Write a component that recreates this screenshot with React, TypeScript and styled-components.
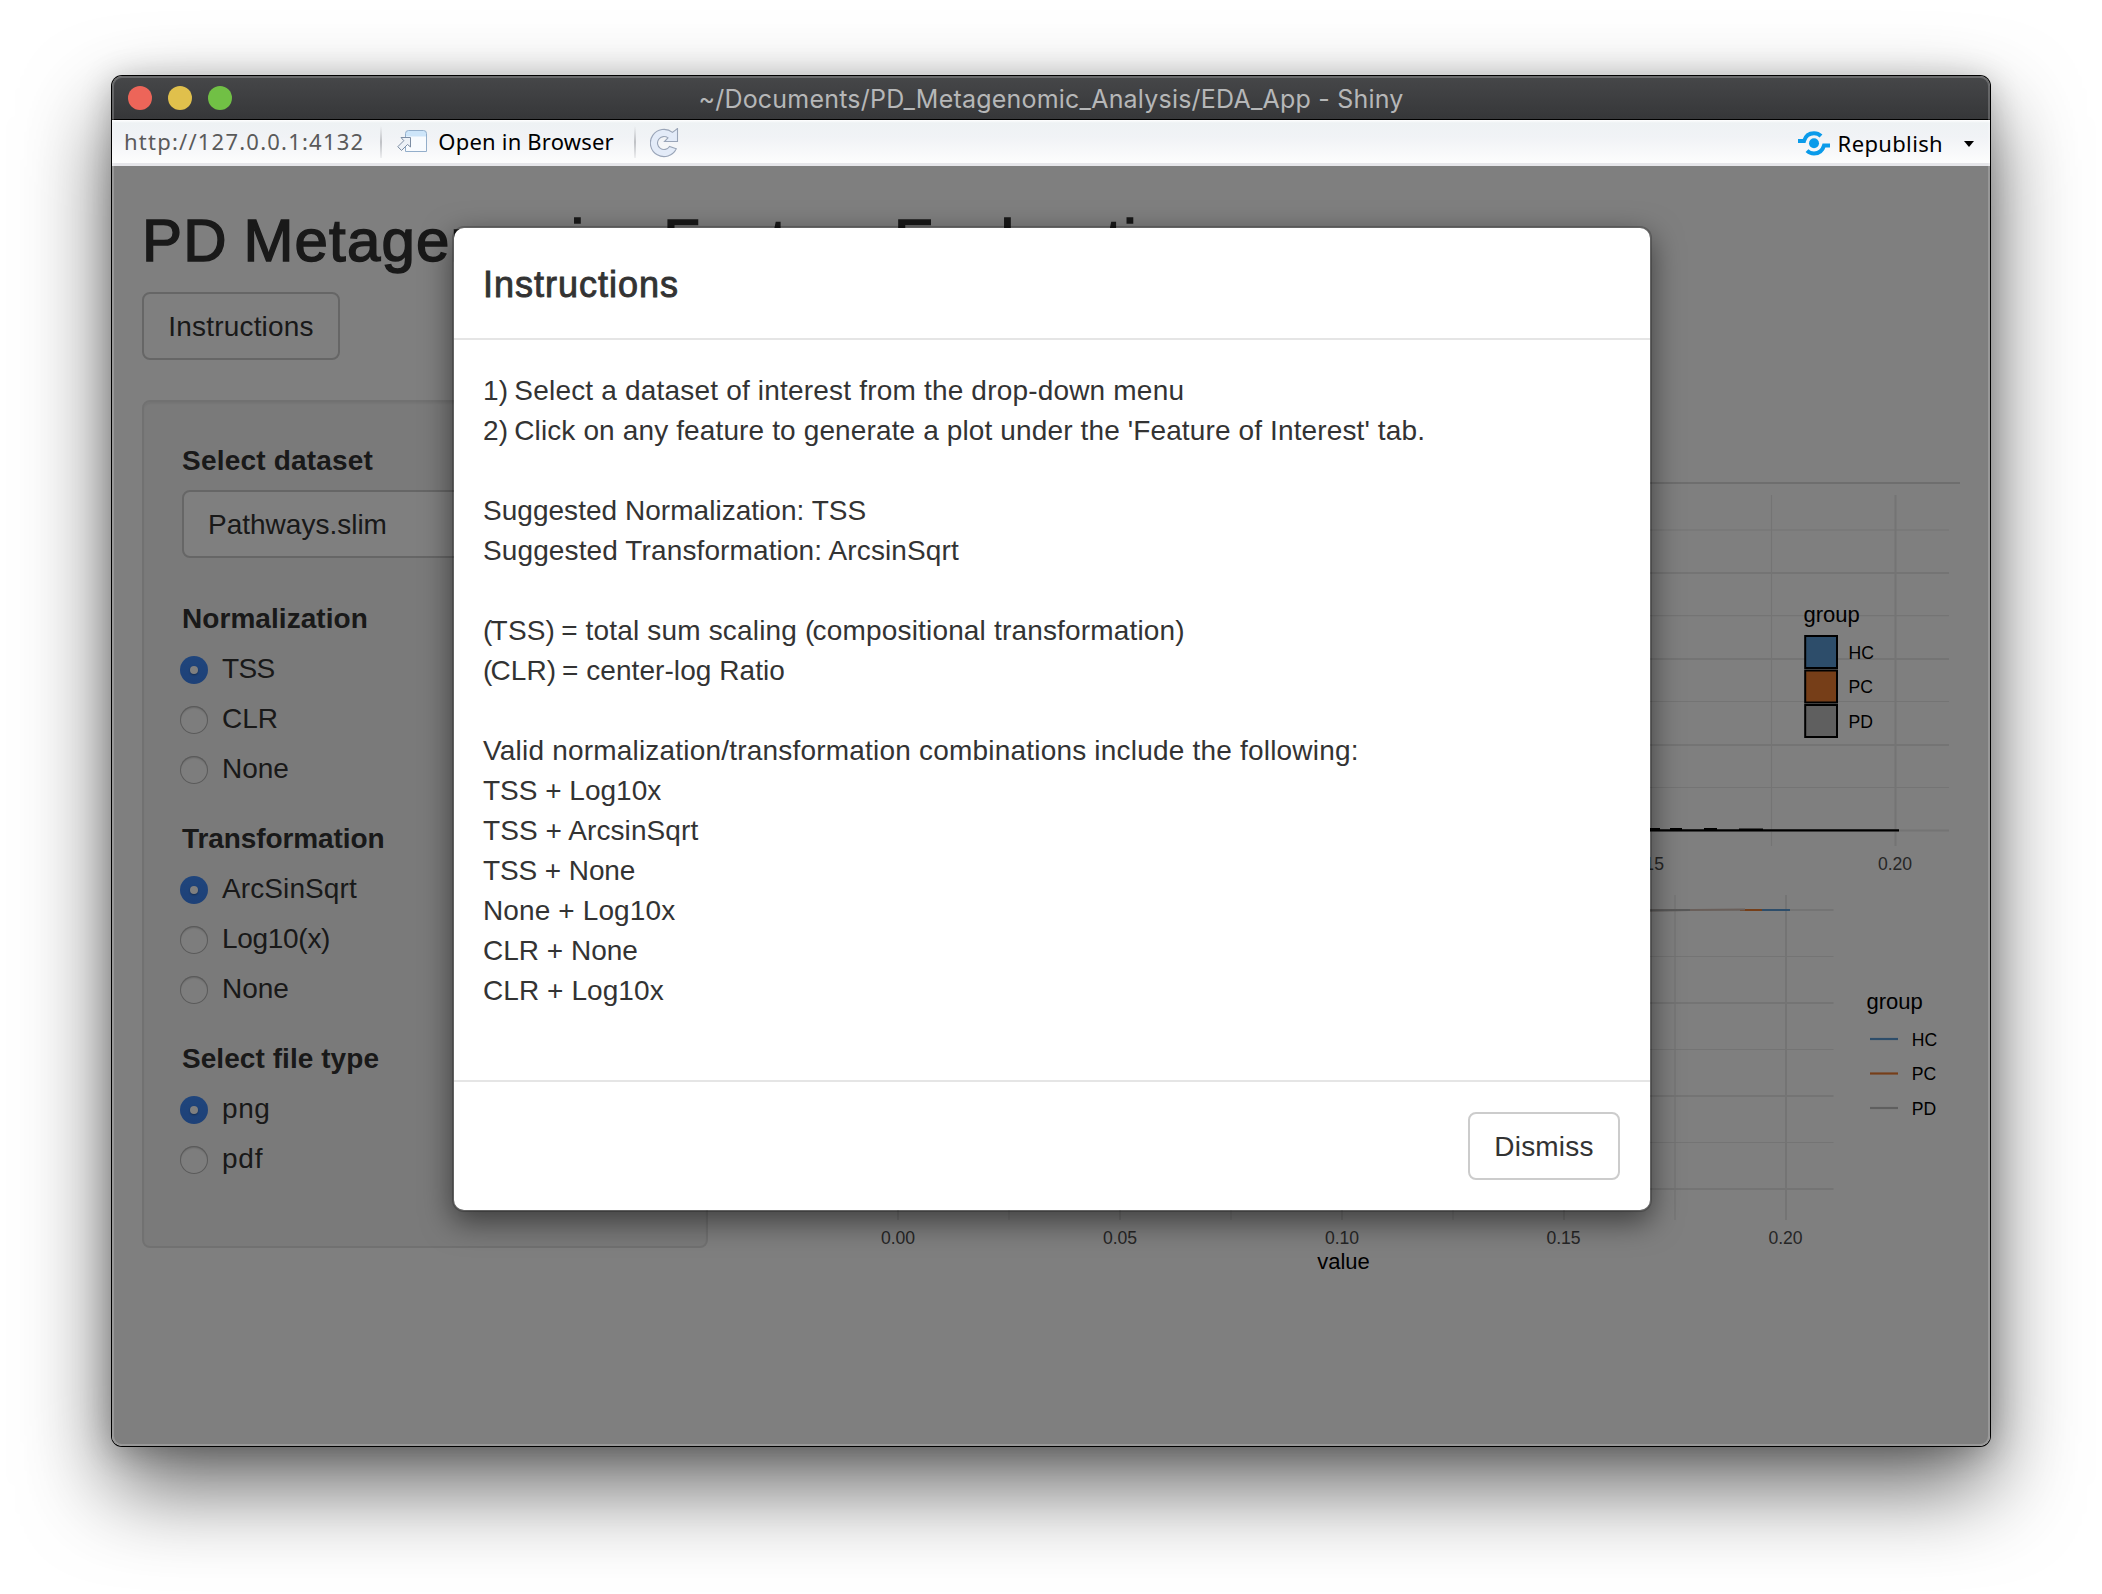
import React from "react";
import styled, { createGlobalStyle } from "styled-components";

const sans = `"Liberation Sans", Arial, sans-serif`;
const ui = `"Noto Sans", "Open Sans", sans-serif`;

const GlobalStyle = createGlobalStyle`
  *, *::before, *::after { box-sizing: border-box; }
  html, body { margin: 0; background: #fff; }
  body { width: 2102px; height: 1594px; overflow: hidden; font-family: ${sans}; font-size: 28px; line-height: 42px; color: #333; }
  h1, h2, p { margin: 0; font-weight: 400; }
`;

const Desktop = styled.div`
  width: 2102px;
  height: 1594px;
  padding: 76px 112px 148px;
  display: flex;
`;

const WindowFrame = styled.div`
  flex: 1;
  display: flex;
  border-radius: 10px;
  box-shadow: 0 0 0 1px #000, 0 40px 88px rgba(0, 0, 0, 0.62), 0 4px 32px rgba(0, 0, 0, 0.24);
`;

const Window = styled.div`
  position: relative;
  flex: 1;
  display: flex;
  flex-direction: column;
  border-radius: 10px;
  overflow: hidden;
`;

const EdgeHighlight = styled.div`
  position: absolute;
  inset: 0;
  border-radius: 10px;
  box-shadow: inset 0 0 0 2px rgba(255, 255, 255, 0.2);
  pointer-events: none;
`;

const TitleBar = styled.header`
  height: 44px;
  padding: 0 16px;
  display: grid;
  grid-template-columns: 1fr auto 1fr;
  align-items: center;
  background: linear-gradient(#464749, #363739);
  border-bottom: 1px solid #000;
`;

const Lights = styled.div`
  display: flex;
  gap: 16px;
`;

const Light = styled.span<{ $color: string }>`
  width: 24px;
  height: 24px;
  border-radius: 50%;
  background: ${(p) => p.$color};
`;

const WindowTitle = styled.h1`
  padding-top: 2px;
  font: 400 25px/40px Inter, Roboto, sans-serif;
  letter-spacing: 0.21px;
  color: #b6b7b8;
`;

const Toolbar = styled.div`
  height: 46px;
  display: flex;
  align-items: center;
  padding: 0 16px 0 12px;
  font: 400 22px/43px ${ui};
  color: #000;
  background: linear-gradient(#fff 0, #eef2f4 3px, #f1f3f6 18px, #fdfdfd 43px);
  border-bottom: 3px solid #e6e6ea;
`;

const Address = styled.span`
  letter-spacing: 1.22px;
  color: #5a5a5a;
`;

const Separator = styled.span<{ $left: number; $right: number }>`
  width: 2px;
  height: 32px;
  margin: 0 ${(p) => p.$right}px 0 ${(p) => p.$left}px;
  background: linear-gradient(rgba(190, 192, 196, 0), #bfc1c5 50%, rgba(190, 192, 196, 0.2));
`;

const ToolLabel = styled.span<{ $gap: number; $spacing: number }>`
  margin-left: ${(p) => p.$gap}px;
  letter-spacing: ${(p) => p.$spacing}px;
`;

const Spacer = styled.span`
  flex: 1;
`;

const PublishMenu = styled.div`
  display: flex;
  align-items: center;
  padding-top: 3px;
`;

const Caret = styled.span`
  margin: 1px 0 0 21px;
  border: 5.5px solid transparent;
  border-top: 6px solid #000;
  border-bottom: 0;
`;

const Page = styled.main`
  position: relative;
  flex: 1;
  padding: 0 30px;
  background: #fff;
`;

const PageTitle = styled.h2`
  height: 106px;
  padding-top: 42px;
  font-size: 60px;
  line-height: 66px;
  letter-spacing: 1.15px;
  word-spacing: -2px;
  -webkit-text-stroke: 1.5px #333;
  white-space: nowrap;
`;

const Button = styled.button<{ $width: number }>`
  display: block;
  width: ${(p) => p.$width}px;
  height: 68px;
  padding: 1px 0 0;
  border: 2px solid #ccc;
  border-radius: 8px;
  background: #fff;
  font: 400 28px/40px ${sans};
  letter-spacing: 0.2px;
  color: #333;
`;

const TitleBlock = styled.div`
  height: 234px;
  display: flex;
  flex-direction: column;
  gap: 20px;
`;

const Columns = styled.div`
  display: flex;
  align-items: flex-start;
  gap: 30px;
`;

const Well = styled.aside`
  width: 566px;
  padding: 38px;
  border: 2px solid #e3e3e3;
  border-radius: 8px;
  background: #f5f5f5;
  box-shadow: inset 0 2px 2px rgba(0, 0, 0, 0.05);
`;

const Group = styled.div<{ $gap?: number }>`
  margin-bottom: ${(p) => p.$gap ?? 30}px;
`;

const Label = styled.div<{ $spacing?: number }>`
  height: 40px;
  font-weight: 700;
  letter-spacing: ${(p) => p.$spacing ?? 0}px;
`;

const SelectBox = styled.div`
  height: 68px;
  margin-top: 10px;
  padding: 12px 24px;
  border: 2px solid #ccc;
  border-radius: 8px;
  background: #fff;
`;

const Option = styled.label`
  display: flex;
  align-items: flex-start;
  gap: 14px;
  height: 40px;
  margin: 10px 0 0 -2px;
`;

const OptionText = styled.span<{ $spacing?: number }>`
  letter-spacing: ${(p) => p.$spacing ?? 0}px;
`;

const Radio = styled.span<{ $on: boolean }>`
  width: 28px;
  height: 28px;
  margin-top: 8px;
  border-radius: 50%;
  display: grid;
  place-items: center;
  background: ${(p) => (p.$on ? "linear-gradient(#3f8af8, #3b82f0)" : "#fbfbfb")};
  box-shadow: ${(p) => (p.$on ? "none" : "inset 0 0 0 1px #b4b4b4, inset 0 2px 2px rgba(0,0,0,.18)")};
  &::after {
    content: "";
    width: 8px;
    height: 8px;
    border-radius: 50%;
    background: ${(p) => (p.$on ? "#fff" : "transparent")};
    box-shadow: ${(p) => (p.$on ? "0 1px 2px rgba(0,0,0,.35)" : "none")};
  }
`;

const Content = styled.section`
  flex: 1;
  display: flex;
  flex-direction: column;
`;

const TabStrip = styled.nav`
  height: 84px;
  border-bottom: 2px solid #ddd;
`;

const Plot = styled.svg`
  display: block;
  font-family: ${sans};
`;

const Backdrop = styled.div`
  position: absolute;
  inset: 0;
  padding-top: 60px;
  background: rgba(0, 0, 0, 0.5);
`;

const Dialog = styled.div`
  width: 1200px;
  margin: 0 0 0 340px;
  border: 2px solid rgba(0, 0, 0, 0.2);
  border-radius: 12px;
  background: #fff;
  background-clip: padding-box;
  box-shadow: 0 10px 30px rgba(0, 0, 0, 0.5);
`;

const DialogHeader = styled.div`
  height: 112px;
  padding: 31px 29px;
  border-bottom: 2px solid #e5e5e5;
`;

const DialogTitle = styled.h2`
  font-size: 36px;
  line-height: 52px;
  letter-spacing: 1px;
  -webkit-text-stroke: 0.9px #333;
`;

const DialogBody = styled.div`
  height: 740px;
  padding: 30px 29px;
`;

const Line = styled.p<{ $spacing: number }>`
  height: 40px;
  letter-spacing: ${(p) => p.$spacing}px;
  white-space: pre;
`;

const Paren = styled.span`
  margin-right: -1.9px;
`;

const DialogFooter = styled.div`
  display: flex;
  justify-content: flex-end;
  padding: 30px;
  border-top: 2px solid #e5e5e5;
`;

const OpenIcon = () => (
  <svg width="31" height="23" viewBox="0 0 31 23">
    <path d="M8.5 21.5V3.5Q8.5 .5 11.5 .5H26.5Q29.5 .5 29.5 3.5V21.5Z" fill="#f8fbfe" />
    <path d="M8.5 6.5V3.5Q8.5 .5 11.5 .5H26.5Q29.5 .5 29.5 3.5V6.5Z" fill="#cde5f9" />
    <path d="M8.5 21.5V3.5Q8.5 .5 11.5 .5H26.5Q29.5 .5 29.5 3.5V21.5Z" fill="none" stroke="#93aeca" />
    <path d="M4 7.5H13.5V17L10.5 14.5L4.5 20.5L.8 16.7L6.8 10.7Z" fill="#edf1f6" stroke="#7c8da3" strokeLinejoin="round" />
  </svg>
);

const RefreshShape = styled.svg`
  margin-top: 2px;
`;

const RefreshIcon = () => (
  <RefreshShape width="29" height="30" viewBox="0 0 29 30">
    <path
      d="M22.5 4.4L27.5 .5V13.5H14.5L18 9.9A6.5 6.5 0 1 0 19.5 18.5L26.3 20.8A13.6 13.6 0 1 1 22.5 4.4Z"
      fill="#e3ebf8"
      stroke="#9aa5b8"
      strokeWidth="1.1"
    />
  </RefreshShape>
);

const PublishIcon = () => (
  <svg width="32" height="25" viewBox="0 0 32 25" fill="none" stroke="#0a9bea" strokeWidth="4">
    <circle cx="16" cy="12.3" r="5" fill="#0a9bea" stroke="none" />
    <path d="M0 10H6C7.5 5 11 2.2 16 2.2C19 2.2 21.2 3.2 23 5" />
    <path d="M32 14.6H26C24.5 19.6 21 22.4 16 22.4C13 22.4 10.8 21.4 9 19.6" />
  </svg>
);

const HC = "#5b9bd5";
const PC = "#ed7d31";
const PD = "#bfbfbf";

type Rule = [number, boolean];

const Grid = ({ x0, x1, y0, y1, ys, xs }: { x0: number; x1: number; y0: number; y1: number; ys: Rule[]; xs: Rule[] }) => (
  <g stroke="#e8e8e8">
    {ys.map(([y, major]) => (
      <line key={y} x1={x0} x2={x1} y1={y} y2={y} strokeWidth={major ? 2.1 : 1.2} />
    ))}
    {xs.map(([x, major]) => (
      <line key={x} x1={x} x2={x} y1={y0} y2={y1} strokeWidth={major ? 2.1 : 1.2} />
    ))}
  </g>
);

const Ticks = ({ y, items }: { y: number; items: [number, string][] }) => (
  <g fontSize="17.6" fill="#4d4d4d" textAnchor="middle">
    {items.map(([x, t]) => (
      <text key={x} x={x} y={y}>{t}</text>
    ))}
  </g>
);

const HistogramPlot = () => (
  <Plot width="1222" height="400" viewBox="738 484 1222 400">
    <Grid
      x0={800} x1={1949} y0={495} y1={846}
      ys={[[530, false], [573, true], [615.6, false], [659, true], [701.5, false], [745, true], [787.5, false], [830.5, true]]}
      xs={[[1647.5, true], [1771.5, false], [1895.5, true]]}
    />
    <path d="M900 830.4H1899" stroke="#000" strokeWidth="2.4" />
    <path d="M1640 829H1660M1670 829H1682M1704 829H1717M1739 829.6H1763" stroke="#000" strokeWidth="2" />
    <Ticks y={870} items={[[1646.8, "0.15"], [1895, "0.20"]]} />
    <text x="1803.5" y="622" fontSize="22">group</text>
    {[HC, PC, PD].map((c, i) => (
      <rect key={c} x="1805.2" y={636 + i * 34.5} width="31.8" height="32" fill={c} stroke="#000" strokeWidth="2" />
    ))}
    {["HC", "PC", "PD"].map((t, i) => (
      <text key={t} x="1848.6" y={659 + i * 34.3} fontSize="17.6">{t}</text>
    ))}
  </Plot>
);

const DensityPlot = () => (
  <Plot width="1222" height="400" viewBox="738 884 1222 400">
    <Grid
      x0={840} x1={1833.5} y0={895} y1={1220}
      ys={[[910, true], [956.5, false], [1003, true], [1049.5, false], [1096, true], [1142.5, false], [1189, true]]}
      xs={[[898, true], [1009, false], [1120, true], [1231, false], [1342, true], [1453, false], [1564, true], [1675, false], [1786, true]]}
    />
    <g fill="none" strokeWidth="2">
      <path d="M1762 910H1790" stroke={HC} />
      <path d="M1740 910H1762" stroke={PC} />
      <path d="M1640 910.6L1745 909.6" stroke="#d4bfb4" />
      <path d="M1640 910.5L1690 910" stroke="#b0b0b0" />
    </g>
    <Ticks y={1244} items={[[898, "0.00"], [1120, "0.05"], [1342, "0.10"], [1563.5, "0.15"], [1785.5, "0.20"]]} />
    <text x="1343.5" y="1269" fontSize="22" textAnchor="middle">value</text>
    <text x="1866.5" y="1009" fontSize="22">group</text>
    {[HC, PC, PD].map((c, i) => (
      <path key={c} d={`M1870 ${1039 + i * 34.5}H1898`} stroke={c} strokeWidth="2.2" />
    ))}
    {["HC", "PC", "PD"].map((t, i) => (
      <text key={t} x="1911.8" y={1046 + i * 34.3} fontSize="17.6">{t}</text>
    ))}
  </Plot>
);

type Choice = [string, number?];

const RadioGroup = ({ title, spacing, options }: { title: string; spacing?: number; options: Choice[] }) => (
  <Group>
    <Label $spacing={spacing}>{title}</Label>
    {options.map(([text, gap], i) => (
      <Option key={text}>
        <Radio $on={i === 0} />
        <OptionText $spacing={gap}>{text}</OptionText>
      </Option>
    ))}
  </Group>
);

const instructions: [string, number][] = [
  ["1) Select a dataset of interest from the drop-down menu", 0.19],
  ["2) Click on any feature to generate a plot under the 'Feature of Interest' tab.", 0.13],
  ["", 0],
  ["Suggested Normalization: TSS", 0.03],
  ["Suggested Transformation: ArcsinSqrt", 0.12],
  ["", 0],
  ["(TSS) = total sum scaling (compositional transformation)", 0.17],
  ["(CLR) = center-log Ratio", 0.06],
  ["", 0],
  ["Valid normalization/transformation combinations include the following:", 0.2],
  ["TSS + Log10x", 0],
  ["TSS + ArcsinSqrt", 0.08],
  ["TSS + None", -0.1],
  ["None + Log10x", 0.12],
  ["CLR + None", 0],
  ["CLR + Log10x", 0.08],
];

export default function App() {
  return (
    <>
      <GlobalStyle />
      <Desktop>
        <WindowFrame>
          <Window>
            <TitleBar>
              <Lights>
                <Light $color="#ed6559" />
                <Light $color="#e0c04c" />
                <Light $color="#71c045" />
              </Lights>
              <WindowTitle>~/Documents/PD_Metagenomic_Analysis/EDA_App - Shiny</WindowTitle>
            </TitleBar>
            <Toolbar>
              <Address>http://127.0.0.1:4132</Address>
              <Separator $left={16} $right={15} />
              <OpenIcon />
              <ToolLabel $gap={10} $spacing={0.2}>Open in Browser</ToolLabel>
              <Separator $left={20} $right={14} />
              <RefreshIcon />
              <Spacer />
              <PublishMenu>
                <PublishIcon />
                <ToolLabel $gap={8} $spacing={0.35}>Republish</ToolLabel>
                <Caret />
              </PublishMenu>
            </Toolbar>
            <Page>
              <TitleBlock>
                <PageTitle>PD Metagenomics Feature Exploration</PageTitle>
                <Button $width={198}>Instructions</Button>
              </TitleBlock>
              <Columns>
                <Well>
                  <Group $gap={40}>
                    <Label $spacing={0.2}>Select dataset</Label>
                    <SelectBox>Pathways.slim</SelectBox>
                  </Group>
                  <RadioGroup title="Normalization" spacing={0.06} options={[["TSS", -0.6], ["CLR"], ["None"]]} />
                  <RadioGroup title="Transformation" spacing={-0.1} options={[["ArcSinSqrt", 0.1], ["Log10(x)", -0.3], ["None"]]} />
                  <RadioGroup title="Select file type" spacing={0.06} options={[["png", 0.6], ["pdf", 0.8]]} />
                </Well>
                <Content>
                  <TabStrip />
                  <HistogramPlot />
                  <DensityPlot />
                </Content>
              </Columns>
              <Backdrop>
                <Dialog>
                  <DialogHeader>
                    <DialogTitle>Instructions</DialogTitle>
                  </DialogHeader>
                  <DialogBody>
                    {instructions.map(([text, spacing], i) => (
                      <Line key={i} $spacing={spacing}>
                        {text.split(/([()])/).map((part, j) =>
                          part === "(" || part === ")" ? <Paren key={j}>{part}</Paren> : part
                        )}
                      </Line>
                    ))}
                  </DialogBody>
                  <DialogFooter>
                    <Button $width={152}>Dismiss</Button>
                  </DialogFooter>
                </Dialog>
              </Backdrop>
            </Page>
            <EdgeHighlight />
          </Window>
        </WindowFrame>
      </Desktop>
    </>
  );
}
